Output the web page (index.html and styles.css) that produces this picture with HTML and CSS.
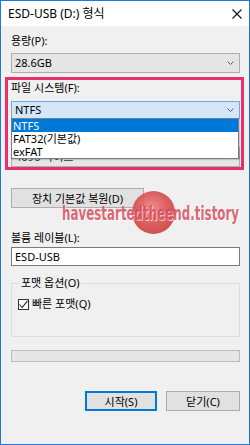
FILE: index.html
```html
<!DOCTYPE html>
<html lang="ko">
<head>
  <meta charset="UTF-8" />
  <meta name="viewport" content="width=device-width, initial-scale=1.0">
  <title>ESD-USB (D:) 형식</title>
  <link rel="stylesheet" href="styles.css">
</head>
<body>

  <div class="window">
    <!-- 제목 표시줄 -->
    <div class="titlebar">
      <span class="title">ESD-USB (D:) 형식</span>
      <svg class="close" width="10" height="10" viewBox="0 0 10 10">
        <path d="M0.5 0.5 L9.5 9.5 M9.5 0.5 L0.5 9.5" stroke="#111" stroke-width="1.1" fill="none"/>
      </svg>
    </div>

    <div class="content">
      <div class="label lbl-cap">용량(P):</div>
      <div class="combo">
        <span>28.6GB</span>
        <svg class="arrow" width="7" height="4" viewBox="0 0 7 4"><path d="M0.5 0.5 L3.5 3.5 L6.5 0.5" stroke="#606060" fill="none"/></svg>
      </div>

      <div class="highlight">
        <div class="label lbl-fs">파일 시스템(F):</div>
        <div class="combo-wrap">
          <div class="combo combo-open">
            <span>NTFS</span>
            <svg class="arrow" width="7" height="4" viewBox="0 0 7 4"><path d="M0.5 0.5 L3.5 3.5 L6.5 0.5" stroke="#606060" fill="none"/></svg>
          </div>
          <ul class="droplist">
            <li class="selected">NTFS</li>
            <li>FAT32(기본값)</li>
            <li>exFAT</li>
          </ul>
        </div>
        <!-- 목록에 가려진 할당 단위 크기 -->
        <div class="label lbl-alloc"></div>
        <div class="combo combo-alloc">
          <span>4096 바이트</span>
        </div>
      </div>

      <button class="btn btn-restore">장치 기본값 복원(D)</button>

      <div class="label lbl-vol">볼륨 레이블(L):</div>
      <div class="textbox">ESD-USB</div>

      <fieldset class="group">
        <legend>포맷 옵션(O)</legend>
        <div class="check">
          <span class="box">
            <svg width="9" height="9" viewBox="0 0 9 9"><path d="M0.5 4.5 L3.2 7.5 L8.5 0.8" stroke="#222" stroke-width="1.1" fill="none"/></svg>
          </span>
          빠른 포맷(Q)
        </div>
      </fieldset>

      <div class="progress"></div>

      <div class="actions">
        <button class="btn btn-start">시작(S)</button>
        <button class="btn btn-close">닫기(C)</button>
      </div>
    </div>

    <!-- 블로그 워터마크 -->
    <div class="wm-circle"></div>
    <div class="wm-text">havestartedtheend.tistory</div>
  </div>

</body>
</html>
```

FILE: styles.css
```css
:root {
  --azul: #1e7ad6;
  --rosa: #e6306c;
  --gris: #f0f0f0;
  --borde: #adadad;
}
* { box-sizing: border-box; }
body {
  margin: 0;
  font-family: 'Noto Sans', 'Noto Sans CJK KR', sans-serif;
  font-size: 11px;
  color: #000;
}
.window {
  position: relative;
  width: 250px;
  height: 445px;
  border: 1px solid var(--azul);
  background: var(--gris);
  overflow: hidden;
}
.titlebar {
  display: flex;
  align-items: center;
  justify-content: space-between;
  height: 25px;
  background: #fff;
  padding: 0 7px 0 7px;
}
.title {
  font-size: 12px;
  line-height: 14px;
  padding-top: 1px;
}
.close {
  margin-top: 1px;
}
.content {
  padding: 0 9px 0 10px;
}
.label {
  height: 14px;
  line-height: 14px;
  font-size: 11px;
}
.lbl-cap { margin-top: 8px; }
.combo {
  display: flex;
  align-items: center;
  justify-content: space-between;
  height: 20px;
  margin-top: 5px;
  padding: 0 5px 0 3px;
  background: #e5e5e5;
  border: 1px solid var(--borde);
  line-height: 18px;
}
.highlight {
  margin: 4px -4px 0 -6px;
  border: 3px solid var(--rosa);
  padding: 1px 1px 0 3px;
}
.lbl-fs { margin-top: 0; }
.combo-wrap {
  position: relative;
  margin-top: 6px;
}
.combo-open {
  margin-top: 0;
  height: 18px;
  background: #d3e7f8;
  border-color: #6ea8e3;
}
.droplist {
  position: absolute;
  left: 0;
  right: 1px;
  top: 17px;
  margin: 0;
  padding: 0;
  list-style: none;
  background: #fff;
  border: 1px solid #6f7f8f;
  box-shadow: 1px 1px 1px rgba(0,0,0,0.15);
  z-index: 2;
}
.droplist li {
  height: 13px;
  line-height: 13px;
  padding-left: 1px;
}
.droplist .selected {
  background: #0078d7;
  color: #fff;
}
.lbl-alloc { margin-top: 8px; }
.combo-alloc {
  margin-top: 6px;
  color: #333;
}
.btn {
  font-family: inherit;
  font-size: 11px;
  height: 20px;
  background: #e1e1e1;
  border: 1px solid var(--borde);
  color: #000;
  padding: 0;
}
.btn-restore {
  display: block;
  margin-top: 18px;
  width: 133px;
}
.lbl-vol { margin-top: 23px; }
.textbox {
  margin-top: 2px;
  height: 19px;
  line-height: 17px;
  padding-left: 3px;
  background: #fff;
  border: 1px solid #7a7a7a;
}
.group {
  margin: 10px 0 0 0;
  padding: 8px 5px 26px 6px;
  border: 1px solid #dcdcdc;
  min-width: 0;
}
.group legend {
  padding: 0 1px;
  margin-left: 2px;
  line-height: 14px;
}
.check {
  display: flex;
  align-items: center;
  gap: 3px;
  height: 12px;
  line-height: 12px;
}
.box {
  display: inline-flex;
  align-items: center;
  justify-content: center;
  width: 11px;
  height: 11px;
  background: #fff;
  border: 1px solid #333;
}
.progress {
  margin-top: 13px;
  height: 12px;
  background: #e6e6e6;
  border: 1px solid #bcbcbc;
}
.actions {
  display: flex;
  justify-content: flex-end;
  gap: 9px;
  margin-top: 29px;
}
.btn-start {
  width: 72px;
  border: 2px solid #0078d7;
}
.btn-close {
  width: 74px;
}
.wm-circle {
  position: absolute;
  left: 131px;
  top: 190px;
  width: 43px;
  height: 43px;
  border-radius: 50%;
  background: radial-gradient(circle at 45% 40%, #f08080 0%, #da4c4c 45%, #bb2a2a 100%);
  opacity: 0.88;
}
.wm-text {
  position: absolute;
  left: 61px;
  top: 199px;
  font-family: 'DejaVu Sans Condensed', 'DejaVu Sans', sans-serif;
  font-weight: bold;
  font-size: 20px;
  line-height: 26px;
  color: rgba(210, 55, 75, 0.75);
  text-shadow: 1px 1px 0 rgba(255,255,255,0.7);
  transform: scaleX(0.66);
  transform-origin: left top;
  white-space: nowrap;
  z-index: 3;
}
```
